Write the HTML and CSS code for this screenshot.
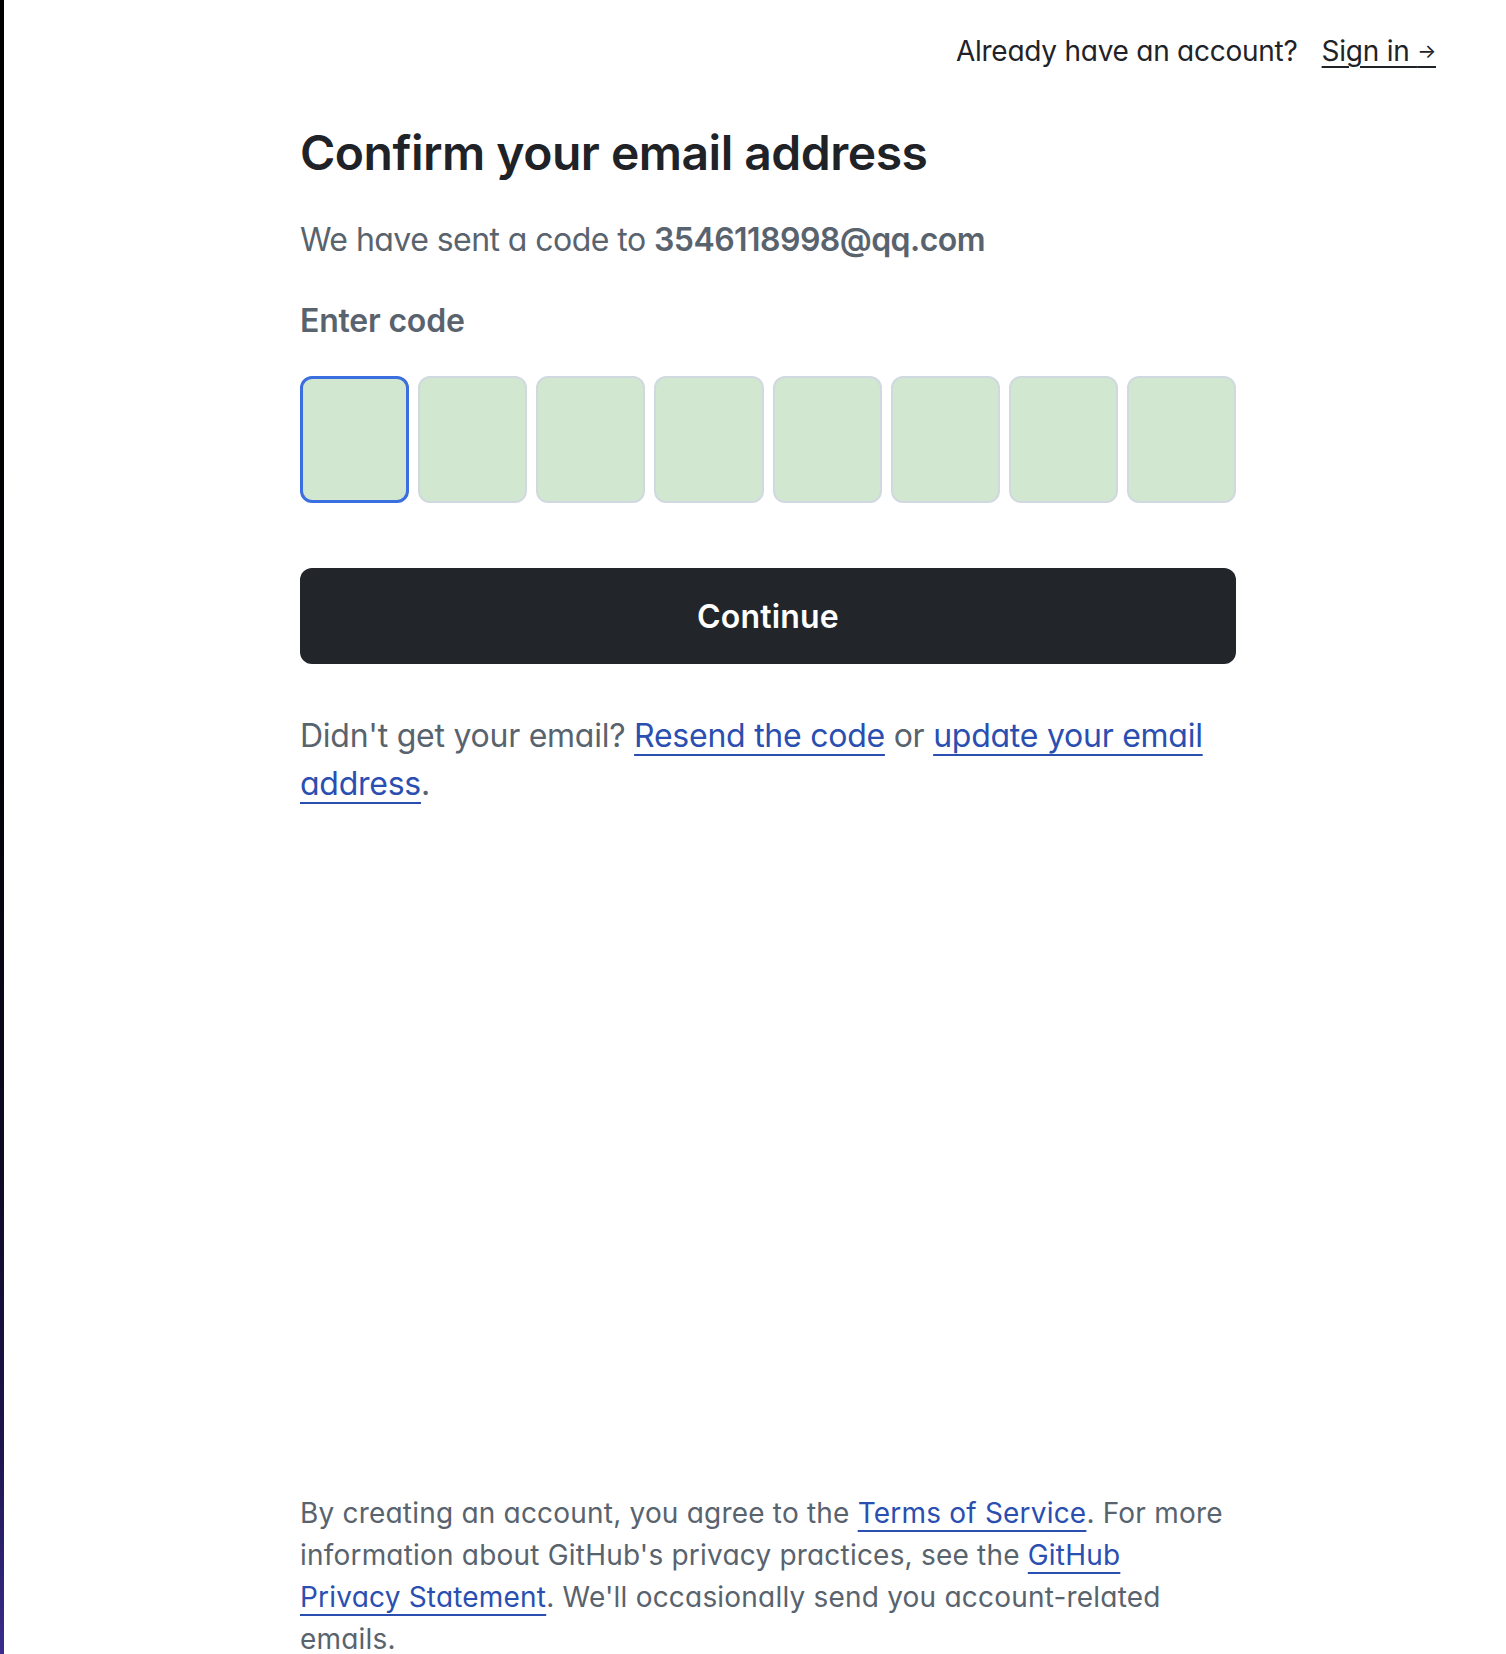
FILE: index.html
```html
<!DOCTYPE html>
<html lang="en">
<head>
<meta charset="utf-8">
<title>Confirm your email address</title>
<link rel="stylesheet" href="styles.css">
</head>
<body>
<div class="page">
  <div class="side"></div>
  <main class="main">
    <header class="topbar">
      <span class="topbar-q">Already have an account?</span>
      <a class="topbar-link" href="#">Sign in <span class="arrow">→</span></a>
    </header>
    <section class="content">
      <h1 class="title">Confirm your email address</h1>
      <p class="sub">We have sent a code to <strong class="email">3546118998@qq.com</strong></p>
      <div class="label">Enter code</div>
      <div class="code-row">
        <div class="code-box focused"></div>
        <div class="code-box"></div>
        <div class="code-box"></div>
        <div class="code-box"></div>
        <div class="code-box"></div>
        <div class="code-box"></div>
        <div class="code-box"></div>
        <div class="code-box"></div>
      </div>
      <button class="continue" type="button">Continue</button>
      <p class="resend">Didn't get your email? <a class="link" href="#">Resend the code</a> or <a class="link" href="#">update your email address</a>.</p>
      <p class="legal">By creating an account, you agree to the <a class="link" href="#">Terms of Service</a>. For more information about GitHub's privacy practices, see the <a class="link" href="#">GitHub Privacy Statement</a>. We'll occasionally send you account-related emails.</p>
    </section>
  </main>
</div>
</body>
</html>
```

FILE: styles.css
```css
html, body {
  margin: 0;
  padding: 0;
  background: #ffffff;
}

body {
  font-family: Inter, "Noto Sans", "Liberation Sans", sans-serif;
  color: #1f2328;
  font-feature-settings: "cv11" 1;
}

.page {
  display: flex;
  height: 1654px;
  overflow: hidden;
}

.side {
  width: 4px;
  flex: none;
  background: linear-gradient(to bottom, #000000 0%, #020106 45%, #0d0a24 70%, #1d1650 88%, #3a2d8e 100%);
}

.main {
  flex: 1;
  display: flex;
  flex-direction: column;
  padding-top: 30px;
}

.topbar {
  display: flex;
  justify-content: flex-end;
  align-items: center;
  gap: 24px;
  padding-right: 70px;
  font-size: 28px;
  line-height: 42px;
  letter-spacing: -0.25px;
}

.topbar-link {
  color: #1f2328;
  text-decoration: underline;
  text-decoration-thickness: 2px;
  text-underline-offset: 5px;
}

.arrow {
  font-size: 20px;
  vertical-align: 3px;
}

.content {
  margin-left: 296px;
  width: 936px;
}

.title {
  margin: 51px 0 0;
  font-size: 48px;
  line-height: 60px;
  font-weight: 600;
  letter-spacing: -0.5px;
  font-feature-settings: normal;
}

.sub {
  margin: 33px 0 0;
  font-size: 32px;
  line-height: 48px;
  color: #59636e;
  letter-spacing: -0.55px;
}

.email {
  font-weight: 600;
}

.label {
  margin-top: 33px;
  font-size: 32px;
  line-height: 48px;
  font-weight: 600;
  color: #59636e;
  letter-spacing: -0.2px;
}

.code-row {
  margin-top: 31px;
  display: grid;
  grid-template-columns: repeat(8, 1fr);
  gap: 9px;
}

.code-box {
  height: 127px;
  box-sizing: border-box;
  background: #d2e7d0;
  border: 2px solid #d1d9e0;
  border-radius: 12px;
}

.code-box.focused {
  border: 3px solid #3b6edf;
}

.continue {
  display: block;
  width: 100%;
  margin-top: 65px;
  height: 96px;
  border: 0;
  border-radius: 12px;
  background: #22262b;
  color: #ffffff;
  font-family: inherit;
  font-size: 32px;
  font-weight: 600;
  letter-spacing: 0.2px;
}

.resend {
  margin: 48px 0 0;
  font-size: 32px;
  line-height: 48px;
  color: #59636e;
  letter-spacing: -0.25px;
}

.link {
  color: #2a4fb0;
  text-decoration: underline;
  text-decoration-thickness: 2px;
  text-underline-offset: 7px;
}

.legal {
  width: 925px;
  margin: 684px 0 0;
  font-size: 28px;
  line-height: 42px;
  color: #59636e;
  letter-spacing: 0.2px;
}
```
